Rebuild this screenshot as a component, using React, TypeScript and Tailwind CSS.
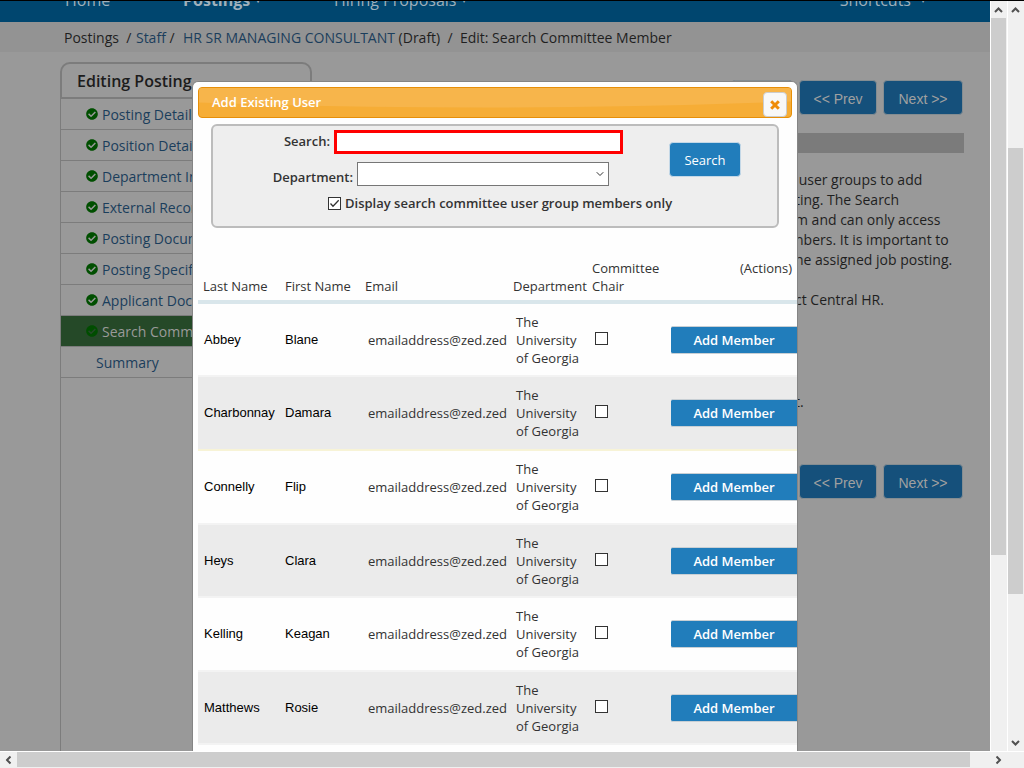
import { clsx } from "clsx"
import { ChevronDown } from "lucide-react"
import { FaCheckCircle } from "react-icons/fa"

const steps = [
  "Posting Details",
  "Position Details",
  "Department Info",
  "External Record",
  "Posting Documents",
  "Posting Specifics",
  "Applicant Docs",
  "Search Committee",
]

const users = [
  { last: "Abbey", first: "Blane" },
  { last: "Charbonnay", first: "Damara" },
  { last: "Connelly", first: "Flip" },
  { last: "Heys", first: "Clara" },
  { last: "Kelling", first: "Keagan" },
  { last: "Matthews", first: "Rosie" },
]

function Arrow({ className }: { className?: string }) {
  return (
    <svg viewBox="0 0 9 6" className={clsx("h-[6px] w-[9px] shrink-0", className)} fill="none" stroke="#505050" strokeWidth="2">
      <path d="M1 5 L4.500 1.500 L8 5" />
    </svg>
  )
}

function PageButtons({ withSave }: { withSave?: boolean }) {
  const base = "h-[35px] rounded border border-[#848d92] bg-[#15507b] pt-[3px] font-['Liberation_Sans',sans-serif] text-[14px] text-[#a0a0a0]"
  return (
    <div className="mr-px flex justify-end gap-[6px]">
      {withSave && <button type="button" aria-label="Save" className={clsx(base, "w-[62px]")} />}
      <button type="button" className={clsx(base, "w-[78px]")}>&lt;&lt; Prev</button>
      <button type="button" className={clsx(base, "w-[80px]")}>Next &gt;&gt;</button>
    </div>
  )
}

function Sidebar() {
  return (
    <aside className="mt-[10px] flex w-[252px] shrink-0 flex-col">
      <h2 className="flex h-[37px] items-center rounded-t-[10px] border-2 border-[#7c7c7c] pl-[15px] text-[16px] font-semibold text-[#1c1c1c]">
        Editing Posting
      </h2>
      <ul className="flex-1 border-x border-[#7c7c7c] text-[#1b3e5c]">
        {steps.map((step, i) => (
          <li
            key={step}
            className={clsx(
              "flex h-[31px] items-center gap-1 border-b border-[#7c7c7c] pl-[25px]",
              i === steps.length - 1 && "bg-[#254928] text-[#9a9a9a]"
            )}
          >
            <FaCheckCircle className={clsx("h-3 w-3", i === steps.length - 1 ? "text-[#004d00]" : "text-[#004f00]")} />
            <a href="#">{step}</a>
          </li>
        ))}
        <li className="flex h-[31px] items-center border-b border-[#7c7c7c] pl-[35px]">
          <a href="#">Summary</a>
        </li>
      </ul>
    </aside>
  )
}

function SearchForm() {
  return (
    <form className="mx-[13px] mt-[6px] flex h-[104px] rounded-md border-2 border-[#bcbcbc] bg-[#eee] font-semibold text-[#333]">
      <div className="flex min-w-0 flex-1 flex-col pt-1">
        <div className="flex items-start gap-1">
          <label htmlFor="search" className="w-[117px] pt-[2px] text-right">Search:</label>
          <input id="search" type="text" className="h-6 w-[289px] border-[3px] border-[#f00] bg-white px-1 outline-none" />
        </div>
        <div className="mt-2 flex items-end gap-1">
          <label htmlFor="department" className="w-[140px] text-right">Department:</label>
          <div className="relative">
            <select id="department" className="block h-6 w-[252px] appearance-none border border-[#767676] bg-white" />
            <ChevronDown className="pointer-events-none absolute top-[6px] right-[3px] h-3 w-3 text-[#333]" />
          </div>
        </div>
        <label className="mt-2 flex items-center gap-1 pl-[115px] whitespace-nowrap">
          <span className="relative flex">
            <input type="checkbox" defaultChecked className="h-[13px] w-[13px] appearance-none border border-[#333] bg-white" />
            <svg viewBox="0 0 13 13" className="pointer-events-none absolute inset-0 h-[13px] w-[13px]" fill="none" stroke="#333" strokeWidth="1.3">
              <path d="M2.500 6.500 L5 9.200 L10.700 3.300" />
            </svg>
          </span>
          Display search committee user group members only
        </label>
      </div>
      <button type="button" className="mt-4 mr-9 h-[35px] w-[72px] shrink-0 rounded border border-[#c4d8e7] bg-[#217dbb] pt-px font-normal text-white">
        Search
      </button>
    </form>
  )
}

function UserTable() {
  return (
    <table className="mt-[27px] w-[599px] table-fixed text-left text-[#333]">
      <colgroup>
        <col className="w-[82px]" />
        <col className="w-[80px]" />
        <col className="w-[148px]" />
        <col className="w-[79px]" />
        <col className="w-[84px]" />
        <col />
      </colgroup>
      <thead>
        <tr className="h-[47px] border-b-4 border-[#d9e6eb] align-bottom whitespace-nowrap">
          <th className="pb-[5px] pl-[5px] font-normal">Last Name</th>
          <th className="pb-[5px] pl-[5px] font-normal">First Name</th>
          <th className="pb-[5px] pl-[5px] font-normal">Email</th>
          <th className="pb-[5px] pl-[5px] font-normal">Department</th>
          <th className="pb-[5px] pl-[5px] font-normal">Committee<br />Chair</th>
          <th className="pt-1 pr-[5px] text-right align-top font-normal">(Actions)</th>
        </tr>
      </thead>
      <tbody>
        {users.map((user, i) => (
          <tr
            key={user.last}
            className={clsx(
              i % 2 === 1 && "border-y-2 border-[#f3f3f3] bg-[#ebebeb]",
              i === 1 && "border-b-[#f7f3d6]",
              i % 2 === 0 || i === 1 ? "h-[74px]" : "h-[73px]"
            )}
          >
            <td className="pl-[6px] font-['Liberation_Sans',sans-serif] text-black">{user.last}</td>
            <td className="pl-[5px] font-['Liberation_Sans',sans-serif] text-black">{user.first}</td>
            <td className="pl-2">emailaddress@zed.zed</td>
            <td className="pl-2">
              The<br />University<br />of Georgia
            </td>
            <td className="pb-[3px] pl-2">
              <input
                type="checkbox"
                aria-label={`Committee chair: ${user.first} ${user.last}`}
                className="block h-[13px] w-[13px] appearance-none border border-[#333] bg-white"
              />
            </td>
            <td>
              <button type="button" className="block h-7 w-[126px] rounded-l-xs border-y border-[#c8cfd4] bg-[#217dbb] font-semibold text-white">
                Add Member
              </button>
            </td>
          </tr>
        ))}
      </tbody>
    </table>
  )
}

function AddUserDialog() {
  return (
    <div className="absolute inset-0 flex justify-center overflow-hidden pt-[80px]">
      <div
        role="dialog"
        aria-labelledby="dialog-title"
        className="w-[606px] shrink-0 overflow-hidden rounded-t-md border border-b-0 border-[#858585] bg-[#fefefe] pt-[5px] pl-[5px] text-[13px] leading-[18px]"
      >
        {/* Title bar */}
        <div className="relative mr-[5px] flex h-[31px] items-center justify-between overflow-hidden rounded border border-[#e78f08] bg-[#f6ad36] pr-1 pl-[13px] font-semibold text-white">
          <svg viewBox="0 0 594 30" preserveAspectRatio="none" className="absolute inset-0 h-full w-full">
            <path d="M0 0 H594 V14 Q300 26 0 15 Z" fill="#f7b54b" />
          </svg>
          <h1 id="dialog-title" className="relative pb-px">Add Existing User</h1>
          <button type="button" aria-label="Close" className="relative mt-1 flex h-[25px] w-6 items-center justify-center rounded border border-[#ccc] bg-[#f8f8f8]">
            <svg viewBox="0 0 10 10" className="h-[10px] w-[10px]" stroke="#ef8c08" strokeWidth="3">
              <path d="M1.200 1.200 L8.800 8.800 M8.800 1.200 L1.200 8.800" />
            </svg>
          </button>
        </div>
        <div className="mr-[5px]">
          <SearchForm />
        </div>
        <UserTable />
      </div>
    </div>
  )
}

export default function App() {
  return (
    <div className="flex h-screen flex-col overflow-hidden border-t border-black bg-[#f0f0f0] font-['Open_Sans','Noto_Sans',sans-serif] text-[14px]">
      <div className="flex min-h-0 flex-1">
        <div className="relative flex min-w-0 flex-1 flex-col overflow-hidden bg-[#999] text-[#1f1f1f]">
          {/* Nav */}
          <nav className="flex h-[21px] shrink-0 items-end overflow-hidden bg-[#00466f] pr-[65px] pb-[11px] pl-[65px] text-[16px] leading-[22px] text-[#9fb0bb]">
            <a href="#" className="w-[118px]">Home</a>
            <a href="#" className="flex w-[151px] items-center gap-[6px] font-bold">Postings <span className="text-[8px]">▾</span></a>
            <a href="#" className="flex items-center gap-[6px]">Hiring Proposals <span className="text-[8px]">▾</span></a>
            <a href="#" className="ml-auto flex items-center gap-[10px]">Shortcuts <span className="text-[8px]">▾</span></a>
          </nav>

          {/* Breadcrumb */}
          <div className="flex h-[30px] shrink-0 items-center bg-[#939393] pl-16 whitespace-pre">
            <span>Postings  / </span>
            <a href="#" className="pl-px text-[#1b3e5c]">Staff</a>
            <span> /  </span>
            <a href="#" className="pl-px text-[#1b3e5c]">HR SR MANAGING CONSULTANT</a>
            <span> (Draft)  /  Edit: Search Committee Member</span>
          </div>

          <div className="flex min-h-0 flex-1 pl-[60px]">
            <Sidebar />
            <main className="min-w-0 flex-1 pt-7 pr-[26px]">
              <PageButtons withSave />
              <div className="mt-[18px] ml-5 h-5 bg-[#7b7b7b]" />
              <div className="mt-[17px] ml-auto w-[169px] leading-5 whitespace-pre">
                <p> user groups to add</p>
                <p>ting. The Search</p>
                <p>m and can only access</p>
                <p>nbers. It is important to</p>
                <p>he assigned job posting.</p>
                <p className="mt-5">ct Central HR.</p>
                <p className="mt-[82px] mb-[52px]">t.</p>
              </div>
              <PageButtons />
            </main>
          </div>

          <AddUserDialog />
        </div>

        {/* Vertical scrollbars */}
        <div className="flex w-[17px] shrink-0 flex-col items-center border-l border-white pr-px">
          <div className="flex h-[17px] items-center"><Arrow /></div>
          <div className="h-[537px] w-full bg-[#cdcdcd]" />
        </div>
        <div className="flex w-[17px] shrink-0 flex-col items-center border-l border-white pr-px">
          <div className="flex h-[17px] items-center"><Arrow /></div>
          <div className="mt-[130px] h-[446px] w-full bg-[#cdcdcd]" />
          <div className="mt-auto flex h-[17px] items-center"><Arrow className="rotate-180" /></div>
        </div>
      </div>

      {/* Horizontal scrollbar */}
      <div className="flex h-[17px] shrink-0 items-center border-t border-white pr-[17px] pb-px">
        <div className="flex w-[17px] justify-center"><Arrow className="-rotate-90" /></div>
        <div className="mr-5 h-full flex-1 bg-[#cdcdcd]" />
        <div className="flex w-[17px] justify-center"><Arrow className="rotate-90" /></div>
      </div>
    </div>
  )
}
